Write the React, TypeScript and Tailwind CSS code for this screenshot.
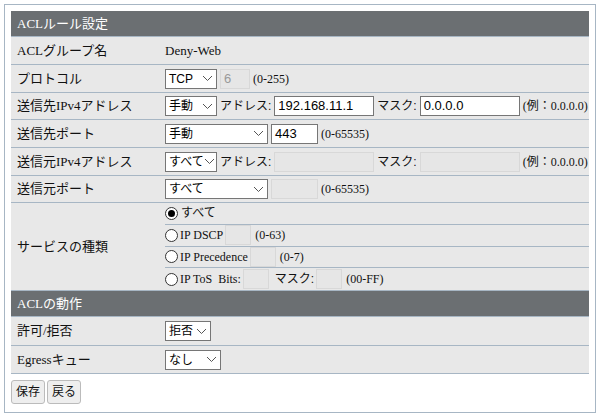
const F = { fontFamily: '"Liberation Serif","Noto Sans CJK JP",serif' };
const S = { fontFamily: '"Liberation Sans","Noto Sans CJK JP",sans-serif' };

function Sel({ v, w }: { v: string; w: string }) {
  return (
    <div className={`${w} shrink-0 whitespace-nowrap h-[20px] bg-white border border-[#767676] flex items-center justify-between pl-[3px] pr-[3px] text-[12px] text-black`} style={S}>
      <span>{v}</span>
      <svg className="shrink-0" width="11" height="7" viewBox="0 0 11 7"><path d="M1 1 5.5 5.5 10 1" fill="none" stroke="#555" strokeWidth="1" /></svg>
    </div>
  );
}

function Inp({ v, w, off }: { v?: string; w: string; off?: boolean }) {
  return (
    <div className={`${w} shrink-0 h-[20px] flex items-center px-[3px] text-[13px] ${off ? 'bg-[#e6e6e6] border border-[#d8d8d8] text-[#999]' : 'bg-white border border-[#767676] text-black'}`} style={S}>
      {v}
    </div>
  );
}

function Row({ label, h, children }: { label: string; h: string; children: React.ReactNode }) {
  return (
    <div className={`flex ${h} items-center border-b border-[#a7b6c4]`}>
      <div className="w-[154px] shrink-0 pl-[6px] text-[13px] whitespace-nowrap">{label}</div>
      <div className="flex items-center gap-[3px] text-[12px] whitespace-nowrap">{children}</div>
    </div>
  );
}

function Radio({ on }: { on?: boolean }) {
  return (
    <div className="w-[13px] h-[13px] shrink-0 rounded-full border border-[#333] bg-white flex items-center justify-center">
      {on && <div className="w-[7px] h-[7px] rounded-full bg-black" />}
    </div>
  );
}

export default function App() {
  return (
    <div className="w-[600px] h-[418px] bg-white p-[4px]" style={F}>
      <div className="h-[409px] border border-[#a7b6c4] px-[6px] pt-[6px] text-[#111]">
        <div className="h-[26px] bg-[#6b6f72] text-white text-[13px] flex items-center pl-[6px] border-b border-[#a7b6c4]">ACLルール設定</div>
        <div className="bg-[#e8e8e8]">
          <Row label="ACLグループ名" h="h-[28px]"><span className="text-[13px]">Deny-Web</span></Row>
          <Row label="プロトコル" h="h-[28px]">
            <Sel v="TCP" w="w-[52px]" /><Inp v="6" w="w-[30px]" off /><span>(0-255)</span>
          </Row>
          <Row label="送信先IPv4アドレス" h="h-[27px]">
            <Sel v="手動" w="w-[52px]" /><span className="text-[12px]" style={S}>アドレス:</span><Inp v="192.168.11.1" w="w-[100px]" />
            <span className="text-[12px]" style={S}>マスク:</span><Inp v="0.0.0.0" w="w-[100px]" /><span>(例：0.0.0.0)</span>
          </Row>
          <Row label="送信先ポート" h="h-[28px]">
            <Sel v="手動" w="w-[103px]" /><Inp v="443" w="w-[47px]" /><span>(0-65535)</span>
          </Row>
          <Row label="送信元IPv4アドレス" h="h-[28px]">
            <Sel v="すべて" w="w-[52px]" /><span className="text-[12px]" style={S}>アドレス:</span><Inp w="w-[100px]" off />
            <span className="text-[12px]" style={S}>マスク:</span><Inp w="w-[100px]" off /><span>(例：0.0.0.0)</span>
          </Row>
          <Row label="送信元ポート" h="h-[27px]">
            <Sel v="すべて" w="w-[103px]" /><Inp w="w-[47px]" off /><span>(0-65535)</span>
          </Row>
          <div className="flex h-[88px] border-b border-[#a7b6c4]">
            <div className="w-[154px] shrink-0 pl-[6px] text-[13px] flex items-center">サービスの種類</div>
            <div className="flex-1 flex flex-col text-[12px] whitespace-nowrap">
              <div className="h-[22px] flex items-center gap-[3px] border-b border-[#a7b6c4]"><Radio on /><span style={S} className="text-[12px]">すべて</span></div>
              <div className="h-[22px] flex items-center gap-[2px] border-b border-[#a7b6c4]"><Radio /><span>IP DSCP</span><Inp w="w-[26px]" off /><span className="ml-[2px]">(0-63)</span></div>
              <div className="h-[22px] flex items-center gap-[2px] border-b border-[#a7b6c4]"><Radio /><span>IP Precedence</span><Inp w="w-[26px]" off /><span className="ml-[2px]">(0-7)</span></div>
              <div className="h-[22px] flex items-center gap-[2px]"><Radio /><span>IP ToS&nbsp; Bits:</span><Inp w="w-[26px]" off /><span style={S} className="text-[12px] ml-[4px]">マスク:</span><Inp w="w-[26px]" off /><span className="ml-[2px]">(00-FF)</span></div>
            </div>
          </div>
          <div className="h-[26px] bg-[#6b6f72] text-white text-[13px] flex items-center pl-[6px] border-b border-[#a7b6c4]">ACLの動作</div>
          <Row label="許可/拒否" h="h-[29px]"><Sel v="拒否" w="w-[46px]" /></Row>
          <Row label="Egressキュー" h="h-[28px]"><Sel v="なし" w="w-[56px]" /></Row>
        </div>
        <div className="flex gap-[2px] pt-[6px]">
          {['保存', '戻る'].map(b => (
            <div key={b} className="h-[24px] px-[4px] flex items-center rounded-[3px] border border-[#bbb] bg-[#eee] text-[12px]" style={S}>{b}</div>
          ))}
        </div>
      </div>
    </div>
  );
}
